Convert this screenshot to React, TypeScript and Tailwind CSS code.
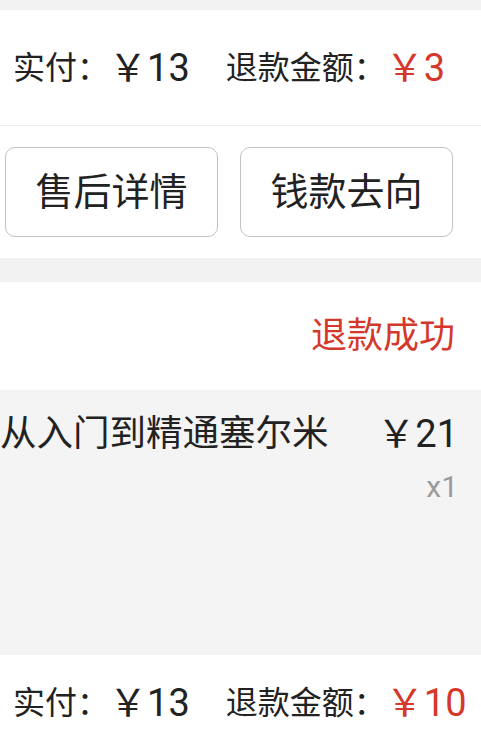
import React from "react";

const font = { fontFamily: '"Roboto", "Noto Sans CJK SC", sans-serif' };

function PayRow({ paid, refund }: { paid: string; refund: string }) {
  return (
    <div className="flex items-center pl-[13px] text-[#222]">
      <span className="text-[32px] leading-none">实付：</span>
      <span className="text-[38px] leading-none">￥{paid}</span>
      <span className="ml-[36px] text-[32px] leading-none">退款金额：</span>
      <span className="text-[38px] leading-none text-[#d4382c]">￥{refund}</span>
    </div>
  );
}

export default function App() {
  return (
    <div className="w-[481px] h-[751px] overflow-hidden bg-white" style={font}>
      <div className="h-[10px] bg-[#f2f2f2]" />

      {/* first order */}
      <div className="bg-white">
        <div className="h-[115px] flex items-center">
          <PayRow paid="13" refund="3" />
        </div>
        <div className="h-px bg-[#ececec]" />
        <div className="h-[132px] flex items-center gap-[22px] pl-[5px]">
          <button className="w-[213px] h-[90px] rounded-[10px] border border-[#c2c2c2] bg-white text-[38px] text-[#222]">
            售后详情
          </button>
          <button className="w-[213px] h-[90px] rounded-[10px] border border-[#c2c2c2] bg-white text-[38px] text-[#222]">
            钱款去向
          </button>
        </div>
      </div>

      <div className="h-[24px] bg-[#f2f2f2]" />

      {/* second order */}
      <div className="bg-white">
        <div className="h-[108px] flex items-center justify-end pr-[26px]">
          <span className="text-[36px] text-[#d4382c]">退款成功</span>
        </div>
        <div className="h-[265px] bg-[#f4f4f4] pt-[22px] pr-[23px]">
          <div className="flex items-start justify-between">
            <span className="text-[36.5px] leading-[44px] text-[#222]">从入门到精通塞尔米</span>
            <span className="text-[38px] leading-[44px] text-[#222]">￥21</span>
          </div>
          <div className="mt-[16px] text-right text-[30px] leading-none text-[#9b9b9b]">x1</div>
        </div>
        <div className="h-[96px] flex items-center">
          <PayRow paid="13" refund="10" />
        </div>
      </div>
    </div>
  );
}
